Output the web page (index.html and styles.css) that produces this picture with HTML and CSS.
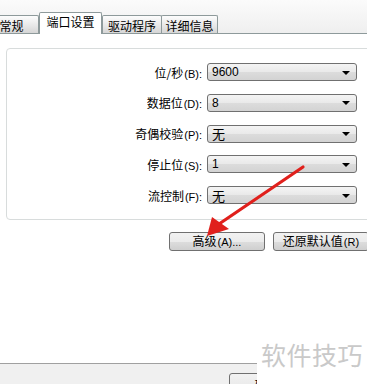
FILE: index.html
```html
<!DOCTYPE html>
<html lang="zh-CN">
<head>
  <meta charset="UTF-8">
  <title>端口设置</title>
  <link rel="stylesheet" href="styles.css">
</head>
<body>

<div class="janela">
  <div class="abas">
    <div class="aba">常规</div>
    <div class="aba ativa">端口设置</div>
    <div class="aba">驱动程序</div>
    <div class="aba">详细信息</div>
  </div>

  <div class="pagina">
    <div class="grupo">
      <div class="linha">
        <label>位/秒<span class="tecla">(B):</span></label>
        <div class="combo"><span>9600</span><i class="seta"></i></div>
      </div>
      <div class="linha">
        <label>数据位<span class="tecla">(D):</span></label>
        <div class="combo"><span>8</span><i class="seta"></i></div>
      </div>
      <div class="linha">
        <label>奇偶校验<span class="tecla">(P):</span></label>
        <div class="combo"><span class="cjk">无</span><i class="seta"></i></div>
      </div>
      <div class="linha">
        <label>停止位<span class="tecla">(S):</span></label>
        <div class="combo"><span>1</span><i class="seta"></i></div>
      </div>
      <div class="linha">
        <label>流控制<span class="tecla">(F):</span></label>
        <div class="combo"><span class="cjk">无</span><i class="seta"></i></div>
      </div>
    </div>

    <div class="botoes">
      <button class="btn">高级<span class="tecla">(A)...</span></button>
      <button class="btn">还原默认值<span class="tecla">(R)</span></button>
    </div>
  </div>

  <div class="rodape">
    <button class="btn btn-ok">确定</button>
  </div>

  <!-- seta vermelha por cima -->
  <svg class="seta-vermelha" width="120" height="90" viewBox="0 0 120 90">
    <line x1="106" y1="7" x2="22" y2="64" stroke="#e0201c" stroke-width="3.2" stroke-linecap="round"/>
    <polygon points="10,76 15,57 32,69" fill="#e0201c"/>
  </svg>

  <div class="marca">软件技巧</div>
</div>

</body>
</html>
```

FILE: styles.css
```css
body {
    margin: 0;
    font-family: "Noto Sans CJK SC", "Liberation Sans", sans-serif;
    font-size: 12px;
    color: #000;
    background-color: #fff;
}

.janela {
    position: relative;
    width: 367px;
    height: 384px;
    overflow: hidden;
    background-color: #f0f0f0;
}

/* abas */
.abas {
    display: flex;
    align-items: flex-end;
    height: 33px;
    margin-left: -16px;
    border-bottom: 1px solid #8e9a9b;
    background: linear-gradient(#fbfbfb, #efefef);
}

.aba {
    box-sizing: border-box;
    height: 18px;
    line-height: 19px;
    padding: 0;
    border: 1px solid #8e9a9b;
    border-bottom: none;
    border-radius: 2px 2px 0 0;
    background: linear-gradient(#fdfdfd, #e6e6e6 60%, #d6d6d6);
    text-align: center;
    white-space: nowrap;
}

.aba:nth-child(1) { width: 55px; }
.aba:nth-child(3) { width: 60px; }
.aba:nth-child(4) { width: 57px; margin-left: -1px; }

.aba.ativa {
    width: 63px;
    height: 22px;
    line-height: 18px;
    margin: 0 0 -1px 0;
    background: #fff;
    position: relative;
    z-index: 1;
}

/* pagina branca */
.pagina {
    height: 330px;
    background-color: #fff;
    border-bottom: 1px solid #a0a0a0;
    box-sizing: border-box;
    padding-top: 14px;
}

.grupo {
    margin-left: 6px;
    width: 380px;
    height: 172px;
    box-sizing: border-box;
    border: 1px solid #d8dcdc;
    border-radius: 4px;
    padding-top: 14px;
    display: flex;
    flex-direction: column;
    gap: 12.75px;
}

.linha {
    display: grid;
    grid-template-columns: 195px 150px;
    column-gap: 5px;
    align-items: center;
    height: 18px;
}

.linha label {
    text-align: right;
    white-space: nowrap;
}

.tecla {
    font-family: "Liberation Sans", sans-serif;
    font-size: 11px;
    margin-left: 1px;
}

.combo {
    height: 18px;
    box-sizing: border-box;
    border: 1px solid #707070;
    border-radius: 3px;
    background: linear-gradient(#f4f4f4, #e9e9e9 50%, #dcdcdc 51%, #d3d3d3);
    display: flex;
    align-items: center;
    justify-content: space-between;
    padding: 0 6px 0 4px;
    font-family: "Liberation Sans", sans-serif;
    font-size: 12px;
}

.combo .cjk {
    font-family: "Noto Sans CJK SC", sans-serif;
    font-size: 13px;
}

.seta {
    width: 0;
    height: 0;
    border-left: 4px solid transparent;
    border-right: 4px solid transparent;
    border-top: 4px solid #000;
    margin-top: 1px;
}

.botoes {
    display: flex;
    gap: 8px;
    margin-top: 12px;
    padding-left: 169px;
}

.btn {
    width: 96px;
    height: 19px;
    flex-shrink: 0;
    padding: 0;
    border: 1px solid #707070;
    border-radius: 3px;
    background: linear-gradient(#f2f2f2, #ebebeb 50%, #dddddd 51%, #cfcfcf);
    font-family: "Noto Sans CJK SC", "Liberation Sans", sans-serif;
    font-size: 12px;
    line-height: 16px;
    color: #000;
}

/* rodape cinza */
.rodape {
    padding: 9px 0 0 229px;
}

.btn-ok {
    width: 75px;
    height: 23px;
    line-height: 12px;
    vertical-align: top;
}

.seta-vermelha {
    position: absolute;
    left: 197px;
    top: 160px;
}

.marca {
    position: absolute;
    right: 0;
    bottom: 0;
    width: 110px;
    height: 48px;
    background-color: #fff;
    color: #c9c9c9;
    font-size: 25px;
    line-height: 26px;
    padding: 5px 0 0 4px;
    box-sizing: border-box;
    white-space: nowrap;
    letter-spacing: 0.5px;
}
```
